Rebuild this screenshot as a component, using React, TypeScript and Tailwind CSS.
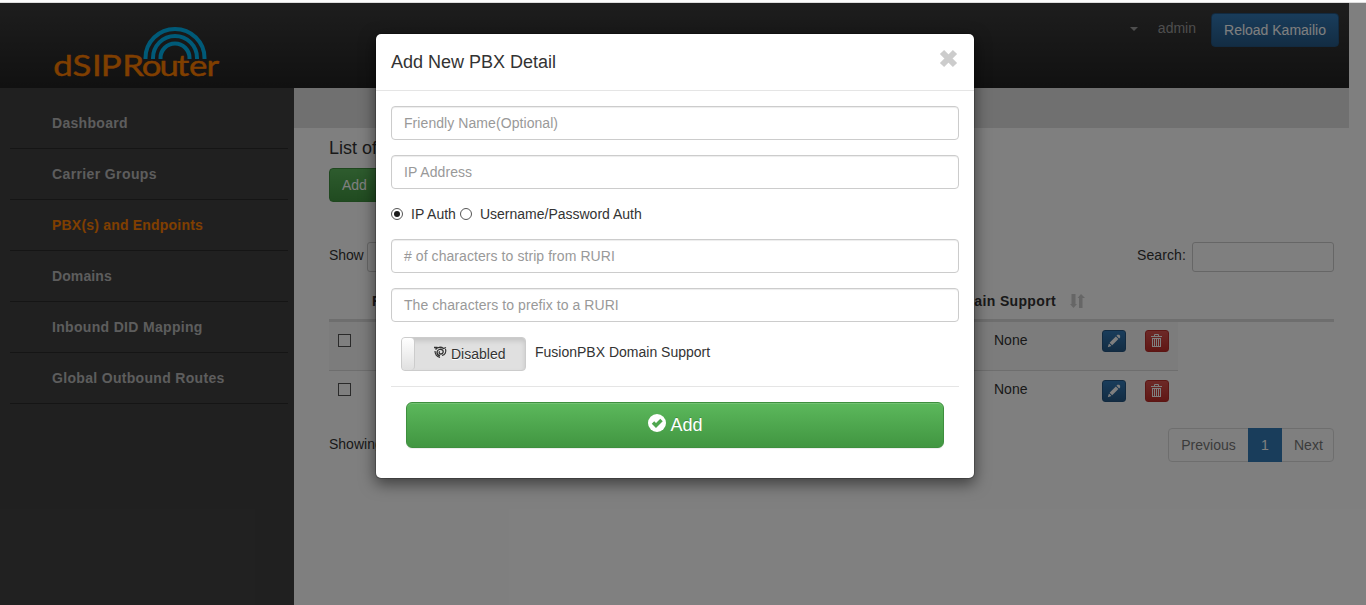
import type { ReactNode } from "react";

const navItems = [
  { label: "Dashboard", style: "tracking-[0.3px] text-[#bababa]" },
  { label: "Carrier Groups", style: "tracking-[0.38px] text-[#bababa]" },
  { label: "PBX(s) and Endpoints", style: "tracking-[0.2px] text-[#ff7f00]" },
  { label: "Domains", style: "tracking-[0.1px] text-[#bababa]" },
  { label: "Inbound DID Mapping", style: "tracking-[0.32px] text-[#bababa]" },
  { label: "Global Outbound Routes", style: "tracking-[0.32px] text-[#bababa]" },
];

function Logo() {
  return (
    <svg width="170" height="60" viewBox="0 0 170 60" className="block overflow-visible">
      <g fill="none" stroke="#00b4f0" strokeWidth="4">
        <path d="M91.5 36V35a29.500 29 0 0 1 59 0v1" />
        <path d="M99 36V35a22 22 0 0 1 44 0v1" />
        <path d="M106.500 36V35a14.500 14.500 0 0 1 29 0v1" />
      </g>
      <text
        y="53.500"
        transform="scale(1.2 1)"
        x="-0.6 15.400 31.700 39 56.800 73.200 88 102.300 112.500 127"
        fill="#ff7f00"
        stroke="#ff7f00"
        strokeWidth="0.4"
        fontSize="29"
        fontFamily="Lato, sans-serif"
      >
        dSIPRouter
      </text>
    </svg>
  );
}

function PencilIcon() {
  return (
    <svg width="14" height="14" viewBox="0 0 14 14" fill="#fff" className="block">
      <path d="M10.400 0.800h1.700l1 1v1.700l-.9.900-2.700-2.700z" />
      <path d="M8.800 2.500l2.600 2.600-6.200 6.200-2.600-2.600z" />
      <path d="M2 9.500l2.400 2.400L0.800 13.200z" />
    </svg>
  );
}

function TrashIcon() {
  return (
    <svg width="14" height="14" viewBox="0 0 14 14" fill="none" stroke="#fff" className="block">
      <path d="M1 2.500h11M4.500 2.500v-2h4v2M2 4.500h9M2.500 4v9M10.500 4v9M2 12.500h9M4.500 4v9M6.500 4v9M8.500 4v9" />
    </svg>
  );
}

function SortIcon() {
  return (
    <svg width="15" height="14" viewBox="0 0 15 14" fill="#ccc" className="block">
      <path d="M1.500 0h4v10H7l-3.500 4L0 10h1.500zM9 14h3.500V4H15L11 0 7.500 4H9z" />
    </svg>
  );
}

function TableRow({ striped }: { striped?: boolean }) {
  return (
    <div
      className={
        striped
          ? "flex h-[48px] w-[849px] bg-[#f9f9f9]"
          : "flex h-[51px] w-[849px] border-t border-[#ddd]"
      }
    >
      <div className="w-[665px] pl-[9px] pt-3">
        <div className="h-[13px] w-[13px] border border-[#555] bg-white" />
      </div>
      <div className="w-[108px] pt-2">None</div>
      <div className={striped ? "flex gap-[19px] pt-2" : "flex gap-[19px] pt-[9px]"}>
        <div className="flex h-[22px] w-6 items-center justify-center rounded-[3px] border border-[#245580] bg-gradient-to-b from-[#337ab7] to-[#265a88]">
          <PencilIcon />
        </div>
        <div className="flex h-[22px] w-6 items-center justify-center rounded-[3px] border border-[#b92c28] bg-gradient-to-b from-[#d9534f] to-[#c12e2a]">
          <TrashIcon />
        </div>
      </div>
    </div>
  );
}

function Field({ children }: { children: ReactNode }) {
  return (
    <div className="h-[34px] rounded border border-[#ccc] px-3 leading-8 tracking-[0.07px] text-[#999] shadow-[inset_0_1px_1px_rgba(0,0,0,0.075)]">
      {children}
    </div>
  );
}

function Radio({ checked }: { checked?: boolean }) {
  return (
    <span className="flex h-3 w-3 items-center justify-center rounded-full border border-[#555] bg-white">
      {checked && <span className="h-1.5 w-1.5 rounded-full bg-[#1c1c1c]" />}
    </span>
  );
}

function Modal() {
  return (
    <div className="absolute left-[375px] top-[30px] h-[446px] w-[600px] rounded-md border border-black/20 bg-white bg-clip-padding shadow-[0_5px_15px_rgba(0,0,0,0.5)]">
      <div className="flex h-[57px] justify-between border-b border-[#e5e5e5] px-[15px]">
        <h4 className="pt-[18px] text-lg leading-5">Add New PBX Detail</h4>
        <svg width="19" height="19" viewBox="0 0 19 19" className="mr-px mt-[15px]">
          <path d="M3 3l13 13M16 3L3 16" stroke="#ccc" strokeWidth="6" />
        </svg>
      </div>
      <div className="flex flex-col px-[15px] pt-[15px]">
        <div className="flex flex-col gap-[15px]">
          <Field>Friendly Name(Optional)</Field>
          <Field>IP Address</Field>
        </div>
        <div className="flex h-[50px] items-center">
          <Radio checked />
          <span className="ml-[8px] mr-[4px]">IP Auth</span>
          <Radio />
          <span className="ml-[8px]">Username/Password Auth</span>
        </div>
        <div className="flex flex-col gap-[15px]">
          <Field># of characters to strip from RURI</Field>
          <Field>The characters to prefix to a RURI</Field>
        </div>
        <div className="mt-[15px] flex pl-[10px]">
          <div className="flex h-[34px] w-[125px] overflow-hidden rounded border border-[#ccc] bg-[#e0e0e0] shadow-[inset_0_3px_5px_rgba(0,0,0,0.125)]">
            <div className="w-[13px] rounded-r border-r border-[#ccc] bg-gradient-to-b from-white to-[#e0e0e0]" />
            <div className="flex pl-[19px]">
              <svg width="13" height="13" viewBox="0 0 13 13" fill="none" stroke="#333" className="mt-[8px]">
                <path d="M0 1.500h3.500M1.500 3.500C3.500 1 7 .5 9.500 2.500L12 1.500" strokeWidth="1.300" />
                <path d="M11.500 3c1 3-.5 6-3.500 6.500M1 5c0 3 2 5.500 5 6.500" strokeWidth="1.200" />
                <path d="M3 6c.5-2.500 3.500-3.500 5.500-2 1.500 1.500.5 4-1.500 4S4.500 6 6 5.500M3 6c0 2 1 3.500 3 4" strokeWidth="1.300" />
              </svg>
              <span className="ml-[4px] pt-[6px] leading-5 [text-shadow:0_1px_0_#fff]">Disabled</span>
            </div>
          </div>
          <span className="ml-[9px] pt-[5px] leading-5">FusionPBX Domain Support</span>
        </div>
        <div className="mt-[15px] border-t border-[#e5e5e5] px-[15px] pt-[15px]">
          <div className="flex h-[46px] items-center justify-center gap-[5px] rounded-md border border-[#3e8f3e] bg-gradient-to-b from-[#5cb85c] to-[#419641] text-lg text-white shadow-[inset_0_1px_0_rgba(255,255,255,0.15),0_1px_1px_rgba(0,0,0,0.075)] [text-shadow:0_-1px_0_rgba(0,0,0,0.2)]">
            <svg width="18" height="18" viewBox="0 0 18 18" className="-mr-px -mt-1 ml-px">
              <circle cx="9" cy="9" r="9" fill="#fff" />
              <path d="M5 8.500l3 3 5.500-5.500" fill="none" stroke="#4fa74f" strokeWidth="3.500" />
            </svg>
            <span>Add</span>
          </div>
        </div>
      </div>
    </div>
  );
}

function Page() {
  return (
    <div className="flex h-[602px] w-[1349px] flex-col">
      <header className="flex h-[85px] justify-between bg-gradient-to-b from-[#3c3c3c] to-[#222]">
        <div className="pl-[54px] pt-[20px]">
          <Logo />
        </div>
        <div className="flex pr-[10px] pt-[10px] text-[#9d9d9d]">
          <svg width="8" height="4" viewBox="0 0 8 4" className="mr-[20px] mt-[14px]">
            <path d="M0 0h8L4 4z" fill="#9d9d9d" />
          </svg>
          <span className="mr-[15px] pt-[5px]">admin</span>
          <div className="h-[34px] w-[128px] rounded border border-[#245580] bg-gradient-to-b from-[#337ab7] to-[#265a88] text-center leading-8 text-white">
            Reload Kamailio
          </div>
        </div>
      </header>
      <div className="flex flex-1">
        <aside className="w-[294px] bg-[#414141] pl-[10px] pr-[6px] pt-[10px]">
          {navItems.map(({ label, style }) => (
            <div key={label} className="h-[51px] border-b border-[#2b2b2b] pl-[42px] leading-[50px] font-bold">
              <span className={style}>{label}</span>
            </div>
          ))}
        </aside>
        <main className="flex-1">
          <div className="h-10 bg-[#e0e0e0]" />
          <div className="pl-[35px] pr-[15px]">
            <h4 className="pt-[10px] text-lg leading-5">List of PBX(s)</h4>
            <div className="mt-[10px] h-[34px] w-[90px] rounded border border-[#3e8f3e] bg-gradient-to-b from-[#5cb85c] to-[#419641] px-3 leading-8 text-white">
              Add
            </div>
            <div className="mt-10 flex h-[30px] justify-between">
              <div className="flex gap-[3px]">
                <span className="pt-[3px] tracking-[-0.1px]">Show</span>
                <div className="h-[30px] w-[75px] rounded-[3px] border border-[#ccc]" />
              </div>
              <div className="flex gap-[6px]">
                <span className="pt-[3px] tracking-[0.1px]">Search:</span>
                <div className="h-[30px] w-[142px] rounded-[3px] border border-[#ccc]" />
              </div>
            </div>
            <div className="mt-[9px] flex h-[41px] items-start border-b-[3px] border-[#ddd] pt-[10px] font-bold">
              <span className="w-[239px] pl-[43px]">Friendly Name</span>
              <span className="w-[488px] text-right tracking-[0.35px]">Domain Support</span>
              <div className="ml-[14px] mt-[3px]">
                <SortIcon />
              </div>
            </div>
            <TableRow striped />
            <TableRow />
            <div className="mt-[7px] flex justify-between">
              <span className="pt-[6px]">Showing 1 to 2 of 2 entries</span>
              <div className="flex h-[34px] rounded border border-[#ddd] leading-8 text-[#777]">
                <span className="w-[79px] text-center">Previous</span>
                <span className="-my-px w-[34px] bg-[#337ab7] text-center leading-[34px] text-white">1</span>
                <span className="w-[51px] pl-3">Next</span>
              </div>
            </div>
          </div>
        </main>
      </div>
    </div>
  );
}

export default function App() {
  return (
    <div className="h-[605px] w-[1366px] overflow-hidden bg-white font-['Liberation_Sans',Arial,sans-serif] text-[14px] leading-5 text-[#333]">
      <div className="h-[3px] border-b border-[#ddd] bg-[#fcfcfc]" />
      <div className="relative h-[602px]">
        <Page />
        <div className="absolute inset-0 bg-black/50" />
        <Modal />
      </div>
    </div>
  );
}
